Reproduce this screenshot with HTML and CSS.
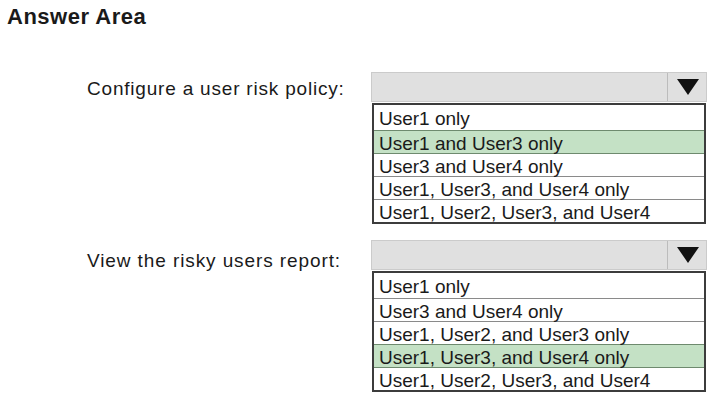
FILE: index.html
```html
<!DOCTYPE html>
<html>
<head>
<meta charset="utf-8">
<link rel="stylesheet" href="styles.css">
</head>
<body>
<div class="page">
  <h1 class="title">Answer Area</h1>
  <div class="question q1">
    <div class="label">Configure a user risk policy:</div>
    <div class="dropdown">
      <div class="head">
        <div class="head-value"></div>
        <div class="head-arrow"><svg width="22" height="16" viewBox="0 0 22 16"><polygon points="0,0 22,0 11,16" fill="#111"/></svg></div>
      </div>
      <div class="list">
        <div class="item">User1 only</div>
        <div class="item sel">User1 and User3 only</div>
        <div class="item">User3 and User4 only</div>
        <div class="item">User1, User3, and User4 only</div>
        <div class="item">User1, User2, User3, and User4</div>
      </div>
    </div>
  </div>
  <div class="question q2">
    <div class="label">View the risky users report:</div>
    <div class="dropdown">
      <div class="head">
        <div class="head-value"></div>
        <div class="head-arrow"><svg width="22" height="16" viewBox="0 0 22 16"><polygon points="0,0 22,0 11,16" fill="#111"/></svg></div>
      </div>
      <div class="list">
        <div class="item">User1 only</div>
        <div class="item">User3 and User4 only</div>
        <div class="item">User1, User2, and User3 only</div>
        <div class="item sel">User1, User3, and User4 only</div>
        <div class="item">User1, User2, User3, and User4</div>
      </div>
    </div>
  </div>
</div>
</body>
</html>
```
FILE: styles.css
```css
html, body {
  margin: 0;
  padding: 0;
  background: #fff;
}
body {
  font-family: "Liberation Sans", Arial, sans-serif;
  color: #111;
}
.page {
  width: 719px;
  height: 404px;
  padding: 5px 0 0 7px;
  box-sizing: border-box;
}
.title {
  margin: 0;
  font-size: 22px;
  font-weight: bold;
  line-height: 24px;
  color: #1a1a1a;
  letter-spacing: 0.5px;
}
.question {
  display: flex;
  align-items: flex-start;
}
.q1 {
  margin-top: 43px;
}
.q2 {
  margin-top: 16px;
}
.label {
  width: 284px;
  padding-left: 80px;
  height: 30px;
  line-height: 34px;
  font-size: 19px;
  letter-spacing: 0.8px;
  color: #1a1a1a;
}
.q2 .label {
  line-height: 42px;
  letter-spacing: 0.9px;
}
.dropdown {
  width: 336px;
  display: flex;
  flex-direction: column;
}
.head {
  height: 30px;
  display: flex;
  background: #e0e0e0;
  border: 1px solid #cbcbcb;
  box-sizing: border-box;
}
.head-value {
  flex: 1;
}
.head-arrow {
  width: 39px;
  border-left: 1px solid #bcbcbc;
  display: flex;
  align-items: center;
  justify-content: center;
  padding-left: 2px;
  box-sizing: border-box;
}
.list {
  margin: 1px 1px 0 1px;
  border: 2px solid #3c3c3c;
  background: #fff;
}
.item {
  height: 23px;
  line-height: 25px;
  padding-left: 5px;
  font-size: 19px;
  color: #1a1a1a;
  border-top: 1px solid #8a8a8a;
  box-sizing: border-box;
}
.item:first-child {
  border-top: none;
  height: 25px;
  line-height: 28px;
}
.item.sel {
  background: #c4e1c5;
  border-top-color: #6e8a6e;
}
.item.sel + .item {
  border-top-color: #6e8a6e;
}
```
